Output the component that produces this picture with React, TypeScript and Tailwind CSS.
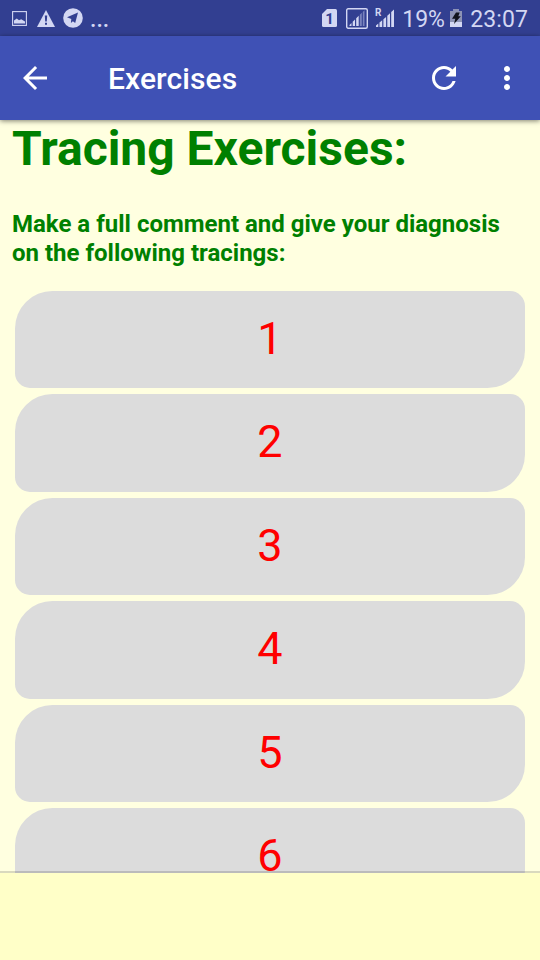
import { ReactNode } from 'react';

const exercises = [1, 2, 3, 4, 5, 6];

function StatusBar() {
  return (
    <div className="flex h-9 shrink-0 items-center justify-between bg-[#323f91] pr-3 pl-3 text-[#d3d7f3]">
      <div className="flex items-center">
        <svg width="15" height="15" viewBox="0 0 15 15">
          <rect x="0.6" y="0.6" width="13.8" height="13.8" fill="none" stroke="currentColor" strokeWidth="1.1" />
          <path d="M2 12.500V9.500l2.800-1.900 2.200 1.700 2.200-1 3.800 2.200v2z" fill="currentColor" />
        </svg>
        <svg width="18" height="17" viewBox="0 0 18 17" className="ml-2.5">
          <path d="M9 0l9 17H0z" fill="currentColor" />
          <path d="M7.800 5.500h2.400L9.800 11.500H8.200zM8 12.800h2v2H8z" fill="#323f91" />
        </svg>
        <svg width="20" height="20" viewBox="0 0 20 20" className="ml-2">
          <circle cx="10" cy="10" r="9.800" fill="currentColor" />
          <path d="M15 4.500L4 9.300l4.300 1.700-.4 4 2-1.800 2.300 1.700z" fill="#323f91" />
        </svg>
        <span className="mt-[3px] ml-[7px] text-[23px] leading-[33px] font-medium">...</span>
      </div>
      <div className="flex items-center">
        <svg width="15" height="18" viewBox="0 0 15 18" className="mr-[9px]">
          <path d="M5 0h8.500a1.500 1.500 0 011.500 1.500v15a1.500 1.500 0 01-1.500 1.500h-12A1.500 1.500 0 010 16.500V5z" fill="currentColor" />
          <text x="7.500" y="14.500" textAnchor="middle" fontSize="15" fontWeight="700" fill="#323f91">1</text>
        </svg>
        <svg width="22" height="21" viewBox="0 0 22 21" className="mr-[7px]">
          <rect x="0.700" y="0.700" width="20.600" height="19.600" rx="1.500" fill="none" stroke="currentColor" strokeWidth="1.400" />
          <path d="M3.500 18v-1l2-2v3zM6.700 18v-4.200l2.300-2.300V18zM10.200 18v-7.700l2.500-2.500V18z" fill="currentColor" />
          <path d="M13.800 18V6.800l2-2V18zM16.800 18V4l1.700-1.700V18z" fill="currentColor" opacity="0.45" />
        </svg>
        <svg width="20" height="20" viewBox="0 0 20 20" className="mr-[7px]">
          <text x="0" y="8" fontSize="10" fontWeight="700" fill="currentColor">R</text>
          <path d="M1 19v-1.500l2.300-2V19zM4.500 19v-4.500l2.700-2.300V19zM8.400 19v-7.700L11.100 9v10zM12.300 19V7.800L15 5.300V19zM16.200 19V4l2.800-2.500V19z" fill="currentColor" />
        </svg>
        <span className="mt-[3px] w-[43px] text-[23px] leading-[33px]">19%</span>
        <svg width="12" height="18" viewBox="0 0 12 18" className="mr-[8px] ml-[5px]">
          <path d="M3.500 0h5v2H12v16H0V2h3.500z" fill="currentColor" />
          <path d="M0 2h3.500V0h5v2H12v11H0z" fill="#8d93b5" />
          <path d="M6 3.500h3.700L8.300 7.300h2.500L4 15l1.300-5.200H2z" fill="#11131c" />
        </svg>
        <span className="mt-[3px] text-[23px] leading-[33px] tracking-[0.1px]">23:07</span>
      </div>
    </div>
  );
}

function IconButton({ label, className, children }: { label: string; className?: string; children: ReactNode }) {
  return (
    <button aria-label={label} className={`flex size-9 items-center justify-center ${className ?? ''}`}>
      <svg width="36" height="36" viewBox="0 0 24 24" fill="currentColor">{children}</svg>
    </button>
  );
}

function AppBar() {
  return (
    <header className="relative z-10 flex h-[84px] shrink-0 items-center bg-[#3f51b5] px-[17px] text-white shadow-[0_1px_5px_rgba(0,0,0,0.5)]">
      <IconButton label="Back">
        <path d="M20 11H7.830l5.590-5.590L12 4l-8 8 8 8 1.410-1.410L7.830 13H20v-2z" />
      </IconButton>
      <h1 className="mt-0.5 ml-[55px] flex-1 text-[30px] leading-9 font-medium tracking-[0.1px]">Exercises</h1>
      <IconButton label="Refresh">
        <path d="M17.650 6.350C16.200 4.900 14.210 4 12 4c-4.420 0-7.990 3.580-7.990 8s3.570 8 7.990 8c3.730 0 6.840-2.550 7.730-6h-2.080c-.82 2.330-3.040 4-5.650 4-3.310 0-6-2.690-6-6s2.690-6 6-6c1.660 0 3.140.69 4.220 1.780L13 11h7V4l-2.350 2.350z" />
      </IconButton>
      <IconButton label="More options" className="-mr-[2px] ml-[27px]">
        <path d="M12 8c1.100 0 2-.9 2-2s-.9-2-2-2-2 .9-2 2 .9 2 2 2zm0 2c-1.100 0-2 .9-2 2s.9 2 2 2 2-.9 2-2-.9-2-2-2zm0 6c-1.100 0-2 .9-2 2s.9 2 2 2 2-.9 2-2-.9-2-2-2z" />
      </IconButton>
    </header>
  );
}

export default function App() {
  return (
    <div className="flex h-[960px] w-[540px] flex-col overflow-hidden bg-[#ffffc8] font-['Roboto',sans-serif]">
      <StatusBar />
      <AppBar />
      <main className="h-[753px] shrink-0 overflow-hidden bg-[#ffffe0]">
        <h2 className="px-3 text-[48px] leading-[57px] font-bold text-[#008000]">Tracing Exercises:</h2>
        <p className="mt-[33px] px-3 text-2xl leading-[29px] font-bold text-[#008000]">
          Make a full comment and give your diagnosis on the following tracings:
        </p>
        <div className="mt-[22.5px] flex flex-col gap-1.5 px-[15px]">
          {exercises.map((n) => (
            <button key={n} className="h-[97.5px] shrink-0 rounded-tl-[37.5px] rounded-tr-[15px] rounded-br-[37.5px] rounded-bl-[15px] bg-[#dcdcdc] pb-[2px] text-[45px] leading-none text-[#ff0000]">
              {n}
            </button>
          ))}
        </div>
      </main>
      {/* divider sits over the last visible row */}
      <div className="relative -mt-0.5 h-0.5 shrink-0 bg-black/15" />
    </div>
  );
}
